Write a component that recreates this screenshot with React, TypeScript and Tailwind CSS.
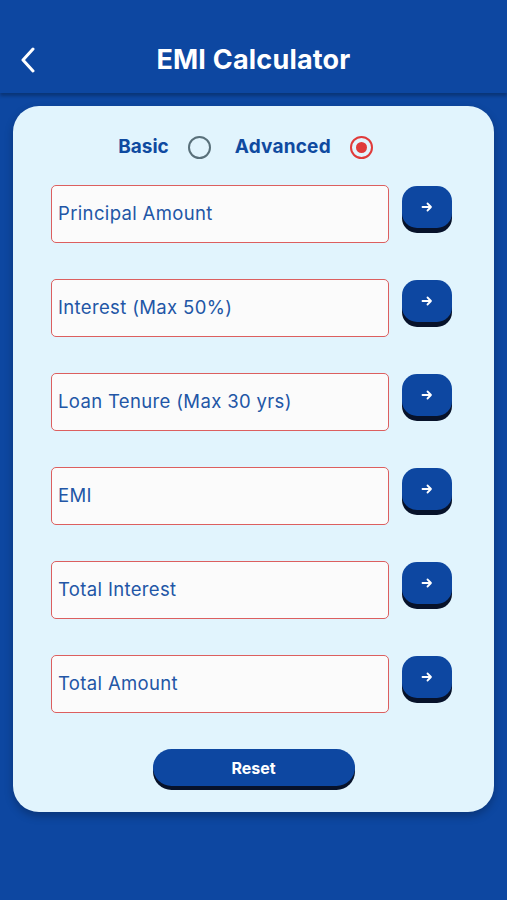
import React from "react";

const fields = [
  "Principal Amount",
  "Interest (Max 50%)",
  "Loan Tenure (Max 30 yrs)",
  "EMI",
  "Total Interest",
  "Total Amount",
];

function Arrow() {
  return (
    <svg width="12" height="12" viewBox="0 0 12 12" fill="none">
      <path d="M1.5 6h8.5M6.5 2.5L10 6l-3.5 3.5" stroke="white" strokeWidth="1.8" strokeLinecap="round" strokeLinejoin="round" />
    </svg>
  );
}

export default function App() {
  return (
    <div
      className="w-[507px] h-[900px] bg-[#0d47a1] flex flex-col overflow-hidden"
      style={{ fontFamily: "Inter, 'Noto Sans', sans-serif" }}
    >
      <div className="h-[93px] bg-[#0d47a1] flex flex-col shadow-[0_3px_3px_rgba(0,0,0,0.25)] relative z-10">
        <div className="h-[30px]" />
        <div className="h-[60px] relative flex items-center justify-center">
          <svg className="absolute left-[20px] top-[17px]" width="16" height="26" viewBox="0 0 16 26" fill="none">
            <path d="M13 2L3 13l10 11" stroke="white" strokeWidth="3" strokeLinecap="round" strokeLinejoin="round" />
          </svg>
          <span className="text-white font-bold text-[27px] tracking-[0.2px]">EMI Calculator</span>
        </div>
      </div>

      <div className="mx-[13px] mt-[13px] h-[706px] bg-[#e1f4fd] rounded-[26px] shadow-[0_4px_8px_rgba(0,0,0,0.25)] flex flex-col pt-[29px]">
        <div className="h-[24px] flex items-center justify-center pr-[16px]">
          <span className="text-[#0f4aa0] font-bold text-[19px] mr-[19px]">Basic</span>
          <span className="w-[23px] h-[23px] rounded-full border-[2.5px] border-[#59707a] mr-[24px]" />
          <span className="text-[#0f4aa0] font-bold text-[19px] tracking-[0.2px] mr-[19px]">Advanced</span>
          <span className="w-[23px] h-[23px] rounded-full border-[2.5px] border-[#e03a3a] flex items-center justify-center">
            <span className="w-[11px] h-[11px] rounded-full bg-[#e03a3a]" />
          </span>
        </div>

        <div className="flex flex-col gap-[36px] mt-[26px] ml-[38px]">
          {fields.map((f) => (
            <div key={f} className="flex items-start">
              <div className="w-[338px] h-[58px] bg-[#fbfbfb] border-[1.5px] border-[#dc5f5f] rounded-[5px] flex items-center pl-[6px]">
                <span className="text-[#2256a6] text-[18.5px] tracking-[0.35px]">{f}</span>
              </div>
              <div className="ml-[13px] mt-[1px] w-[50px] h-[42px] bg-[#0d47a1] rounded-[15px] shadow-[0_5px_0_#07122a] flex items-center justify-center">
                <Arrow />
              </div>
            </div>
          ))}
        </div>

        <div className="flex justify-center mt-[36px]">
          <div className="w-[202px] h-[37px] bg-[#0d47a1] rounded-full shadow-[0_4px_0_#07122a] flex items-center justify-center">
            <span className="text-white font-bold text-[16px]">Reset</span>
          </div>
        </div>
      </div>
    </div>
  );
}
